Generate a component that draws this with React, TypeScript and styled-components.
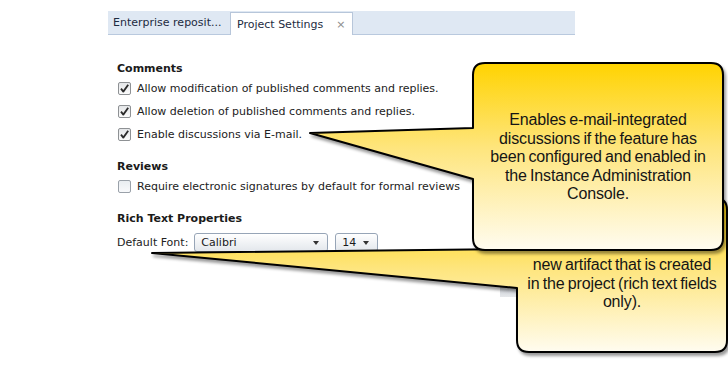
import React from 'react';
import styled, { createGlobalStyle } from 'styled-components';

const GlobalStyle = createGlobalStyle`
  html, body {
    margin: 0;
    padding: 0;
    background: #fff;
  }
  body {
    font-family: "DejaVu Sans", Verdana, sans-serif;
  }
`;

const Screen = styled.div`
  position: relative;
  width: 728px;
  height: 368px;
  overflow: hidden;
  background: #fff;
`;

const Workspace = styled.div`
  padding: 11px 0 0 108px;
`;

const Panel = styled.div`
  width: 467px;
`;

const TabStrip = styled.div`
  display: flex;
  align-items: flex-end;
  height: 23px;
  background: #dfe8f3;
  border-bottom: 1px solid #b9c9de;
`;

const Tab = styled.div<{ $active?: boolean }>`
  display: flex;
  align-items: center;
  box-sizing: border-box;
  width: ${p => (p.$active ? '123px' : '122px')};
  height: 23px;
  padding-left: ${p => (p.$active ? '6px' : '5px')};
  margin-bottom: ${p => (p.$active ? '-1px' : '0')};
  background: ${p => (p.$active ? '#fff' : 'transparent')};
  border: ${p => (p.$active ? '1px solid #b7c6da' : 'none')};
  border-bottom: none;
  color: #1d2b3f;
  font-size: 11px;
  white-space: nowrap;
`;

const CloseMark = styled.span`
  margin-left: 13px;
  color: #8c8c8c;
  font-size: 11px;
`;

const Content = styled.div`
  padding: 26px 0 0 9px;
  color: #222;
  font-size: 11px;
`;

const Section = styled.section`
  & + & {
    margin-top: 13px;
  }
`;

const Heading = styled.h3`
  margin: 0;
  font-size: 11px;
  font-weight: bold;
  line-height: 16px;
  color: #1a1a1a;
`;

const OptionRow = styled.label`
  display: flex;
  align-items: center;
  gap: 6px;
  height: 23px;
  padding-left: 1px;
`;

const Box = styled.span<{ $checked: boolean }>`
  display: flex;
  align-items: center;
  justify-content: center;
  box-sizing: border-box;
  width: 13px;
  height: 13px;
  border: 1px solid ${p => (p.$checked ? '#8e9194' : '#9aa1a9')};
  border-radius: 2px;
  background: ${p =>
    p.$checked
      ? 'linear-gradient(#e4e6e8, #fbfbfb)'
      : 'linear-gradient(#e9edf1, #f8f9fb)'};
`;

const FontRow = styled.div`
  display: flex;
  align-items: center;
  padding-top: 6px;
  height: 19px;
`;

const FieldLabel = styled.span`
  margin-right: 6px;
`;

const Select = styled.div<{ $width: number }>`
  display: flex;
  align-items: center;
  justify-content: space-between;
  box-sizing: border-box;
  width: ${p => p.$width}px;
  height: 19px;
  padding: 0 8px 0 6px;
  margin-right: 7px;
  border: 1px solid #97a5b7;
  border-radius: 3px;
  background: linear-gradient(#ffffff, #e3e7ec);
  color: #1a1a1a;
`;

const Arrow = styled.span`
  width: 0;
  height: 0;
  border-left: 3.5px solid transparent;
  border-right: 3.5px solid transparent;
  border-top: 4px solid #333;
`;

const FooterBar = styled.div`
  display: flex;
  justify-content: flex-end;
  margin-top: 35px;
`;

const ScrollStub = styled.div`
  width: 75px;
  height: 10px;
  background: linear-gradient(#c9cdd3, #e6e8eb);
`;

const CalloutLayer = styled.svg`
  position: absolute;
  left: 0;
  top: 0;
  overflow: visible;
  pointer-events: none;
  filter: drop-shadow(2px 3px 1.5px rgba(0, 0, 0, 0.4));
`;

const CalloutText = styled.div<{ $x: number; $y: number; $w: number }>`
  position: absolute;
  left: ${p => p.$x}px;
  top: ${p => p.$y}px;
  width: ${p => p.$w}px;
  font-family: "Liberation Sans", Arial, sans-serif;
  font-size: 16px;
  line-height: 18.5px;
  letter-spacing: -0.15px;
  word-spacing: -1px;
  text-align: center;
  color: #151515;
`;

const Line = styled.div``;

type Rect = { x: number; y: number; w: number; h: number };

const calloutPath = (b: Rect, tip: [number, number], attach: [number, number], r = 12) => {
  const x0 = b.x;
  const y0 = b.y;
  const x1 = b.x + b.w;
  const y1 = b.y + b.h;
  return [
    `M${x0 + r},${y0}`,
    `H${x1 - r}`,
    `Q${x1},${y0} ${x1},${y0 + r}`,
    `V${y1 - r}`,
    `Q${x1},${y1} ${x1 - r},${y1}`,
    `H${x0 + r}`,
    `Q${x0},${y1} ${x0},${y1 - r}`,
    `V${attach[1]}`,
    `L${tip[0]},${tip[1]}`,
    `L${x0},${attach[0]}`,
    `V${y0 + r}`,
    `Q${x0},${y0} ${x0 + r},${y0}`,
    'Z',
  ].join(' ');
};

type CalloutProps = {
  id: string;
  box: Rect;
  tip: [number, number];
  attach: [number, number];
  textTop: number;
  lines: string[];
};

const Callout = ({ id, box, tip, attach, textTop, lines }: CalloutProps) => (
  <>
    <CalloutLayer width={728} height={368} viewBox="0 0 728 368">
      <defs>
        <linearGradient id={id} x1="0" y1="0" x2="0" y2="1">
          <stop offset="0" stopColor="#ffd300" />
          <stop offset="0.45" stopColor="#fee57c" />
          <stop offset="1" stopColor="#fffcf0" />
        </linearGradient>
      </defs>
      <path
        d={calloutPath(box, tip, attach)}
        fill={`url(#${id})`}
        stroke="#000"
        strokeWidth={2}
        strokeLinejoin="round"
      />
    </CalloutLayer>
    <CalloutText $x={box.x} $y={textTop} $w={box.w}>
      {lines.map(l => (
        <Line key={l}>{l}</Line>
      ))}
    </CalloutText>
  </>
);

const Checkbox = ({ checked }: { checked: boolean }) => (
  <Box $checked={checked}>
    {checked && (
      <svg width="11" height="11" viewBox="0 0 11 11">
        <path d="M2 5.6 L4.3 8.6 L9.2 1.8" fill="none" stroke="#2b2b2b" strokeWidth="1.8" strokeLinejoin="round" />
      </svg>
    )}
  </Box>
);

const comments = [
  { label: 'Allow modification of published comments and replies.', checked: true },
  { label: 'Allow deletion of published comments and replies.', checked: true },
  { label: 'Enable discussions via E-mail.', checked: true },
];

const App = () => {
  return (
    <Screen>
      <GlobalStyle />
      <Workspace>
        <Panel>
          <TabStrip>
            <Tab>Enterprise reposit...</Tab>
            <Tab $active>
              Project Settings<CloseMark>×</CloseMark>
            </Tab>
          </TabStrip>
          <Content>
            <Section>
              <Heading>Comments</Heading>
              {comments.map(c => (
                <OptionRow key={c.label}>
                  <Checkbox checked={c.checked} />
                  {c.label}
                </OptionRow>
              ))}
            </Section>
            <Section>
              <Heading>Reviews</Heading>
              <OptionRow>
                <Checkbox checked={false} />
                Require electronic signatures by default for formal reviews
              </OptionRow>
            </Section>
            <Section>
              <Heading>Rich Text Properties</Heading>
              <FontRow>
                <FieldLabel>Default Font:</FieldLabel>
                <Select $width={134}>
                  Calibri
                  <Arrow />
                </Select>
                <Select $width={43}>
                  14
                  <Arrow />
                </Select>
              </FontRow>
            </Section>
          </Content>
          <FooterBar>
            <ScrollStub />
          </FooterBar>
        </Panel>
      </Workspace>

      <Callout
        id="calloutFont"
        box={{ x: 517, y: 198, w: 210, h: 154 }}
        tip={[152, 253]}
        attach={[249, 288]}
        textTop={256}
        lines={['new artifact that is created', 'in the project (rich text fields', 'only).']}
      />
      <Callout
        id="calloutMail"
        box={{ x: 473, y: 63, w: 250, h: 187 }}
        tip={[310, 133]}
        attach={[128, 179]}
        textTop={111}
        lines={[
          'Enables e-mail-integrated',
          'discussions if the feature has',
          'been configured and enabled in',
          'the Instance Administration',
          'Console.',
        ]}
      />
    </Screen>
  );
};

export default App;
